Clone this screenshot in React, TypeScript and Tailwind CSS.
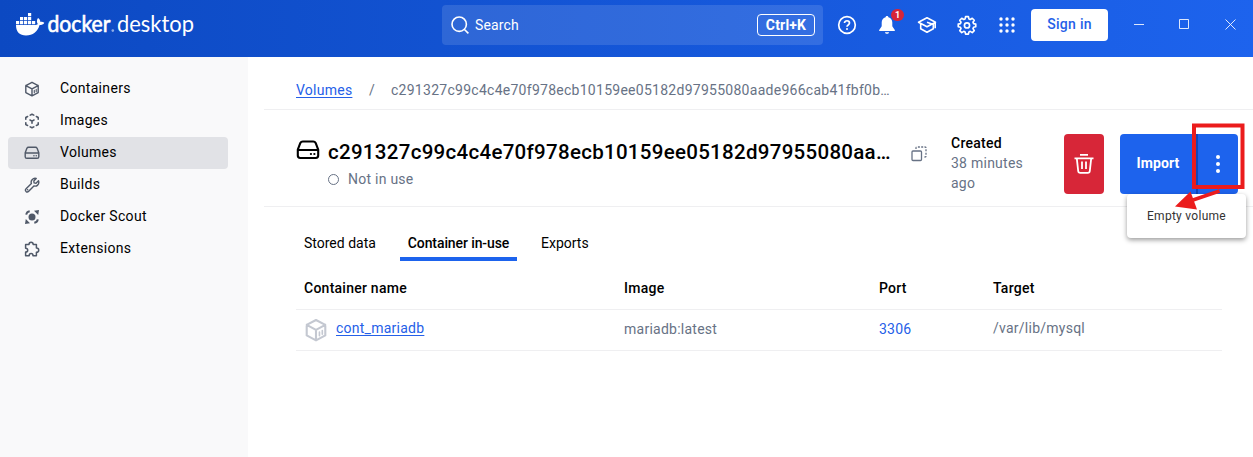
import React from "react";

const HASH_LONG = "c291327c99c4c4e70f978ecb10159ee05182d97955080aade966cab41fbf0b…";
const HASH_SHORT = "c291327c99c4c4e70f978ecb10159ee05182d97955080aa…";

function Logo() {
  return (
    <svg width="180" height="30" viewBox="0 0 180 30" className="block shrink-0" fill="#fff" aria-label="docker desktop">
      <path d="M12 3h3.2v3.2H12zM4 7h3.2v3.2H4zM8 7h3.2v3.2H8zM12 7h3.2v3.2H12zM0 11h3.2v3.2H0zM4 11h3.2v3.2H4zM8 11h3.2v3.2H8zM12 11h3.2v3.2H12zM16 11h3.2v3.2H16z" />
      <path d="M0 15H18.5C20.2 15 21.2 14.6 21.8 14C20.5 12 20.7 9.8 22 8C23.6 9.1 24.3 10.4 24.4 12C25.7 11.7 27.1 11.9 28.3 12.7C27.4 14.5 25.7 15.1 23.6 15.1C21.5 21.9 17 25.5 10 25.5C3.6 25.5 -0.1 22 0 15Z" />
      <text x="31.500" y="22" textLength="63" lengthAdjust="spacingAndGlyphs" stroke="#fff" strokeWidth=".6" className="font-['Lato',sans-serif] text-[22.5px]">docker</text>
      <circle cx="96.8" cy="20.6" r="1.3" opacity=".55" />
      <text x="101" y="22" textLength="77" lengthAdjust="spacingAndGlyphs" className="font-['Lato',sans-serif] text-[22.5px]">desktop</text>
    </svg>
  );
}

type IconProps = { size?: number; className?: string };

function Stroke({ size = 16, className = "", w = 1.4, children }: IconProps & { w?: number; children: React.ReactNode }) {
  return (
    <svg width={size} height={size} viewBox="0 0 16 16" fill="none" stroke="currentColor" strokeWidth={w} strokeLinejoin="round" strokeLinecap="round" className={`block shrink-0 ${className}`}>
      {children}
    </svg>
  );
}

const ContainerIcon = (p: IconProps) => (
  <Stroke {...p} w={1.4}>
    <path d="M8 1.3 14.2 4.6V11.6L8 14.9 1.8 11.6V4.6ZM1.8 4.6 8 7.9 14.2 4.6M8 7.9V14.9" />
    <path d="M10.3 9.4v2.4M12.2 8.4v2.4" strokeWidth="1.1" />
  </Stroke>
);

const ImageIcon = (p: IconProps) => (
  <Stroke {...p} w={1.6}>
    <path d="M6.2 2.1 8 1.2l1.8.9M12.4 3.5l1.8 1v1.7M14.2 9.8v1.8l-1.8.9M9.8 13.9 8 14.8l-1.8-.9M3.6 12.5l-1.8-.9V9.8M1.8 6.2V4.5l1.8-1" />
    <path d="M6 7 8 8.1 10 7M8 8.1v2.2" />
  </Stroke>
);

const VolumeIcon = (p: IconProps) => (
  <Stroke {...p} w={1.4}>
    <path d="M4.5 2.3h7c.8 0 1.3.4 1.6 1l1.7 4.5v3.9c0 .9-.7 1.6-1.6 1.6H2.8c-.9 0-1.6-.7-1.6-1.6V7.8l1.7-4.5c.3-.6.8-1 1.6-1ZM1.3 8h13.4" />
    <path d="M9.9 10.7h.1M12.2 10.7h.1" />
  </Stroke>
);

const WrenchIcon = (p: IconProps) => (
  <Stroke {...p} w={1.4}>
    <path d="M12.2 1.5 9.8 4l.3 1.9 1.9.3 2.5-2.4c.7 2 .1 3.6-1.1 4.6-1 .8-2.3.9-3.5.6L4.7 14.3c-.8.8-2 .8-2.7.1-.7-.8-.7-1.9.1-2.7L7.4 6.6c-.5-1.4-.3-2.8.7-3.9 1.1-1.2 2.5-1.7 4.1-1.2Z" />
    <path d="M3.6 12.8h.1" />
  </Stroke>
);

const ScoutIcon = (p: IconProps) => (
  <svg width="16" height="16" viewBox="0 0 16 16" className={`block shrink-0 ${p.className ?? ""}`} fill="currentColor">
    <circle cx="8" cy="8" r="3.500" />
    <path d="M10 1.800 15 1 14.200 6ZM6 14.200 1 15 1.800 10Z" />
    <path d="M2.200 5.700C2.500 3.700 3.700 2.500 5.700 2.200M13.800 10.300c-.3 2-1.500 3.200-3.500 3.500" fill="none" stroke="currentColor" strokeWidth="1.900" />
  </svg>
);

const PuzzleIcon = (p: IconProps) => (
  <Stroke {...p} w={1.500}>
    <path d="M5 3.600C5 .5 9.200.5 9.200 3.600h3.200v3.500c3.100 0 3.100 4.100 0 4.100v3.500H9c0-2.800-3.800-2.800-3.800 0H1.600v-3.600c2.800 0 2.800-3.800 0-3.800V3.600Z" />
  </Stroke>
);

const NAV = [
  { label: "Containers", Icon: ContainerIcon },
  { label: "Images", Icon: ImageIcon },
  { label: "Volumes", Icon: VolumeIcon, active: true },
  { label: "Builds", Icon: WrenchIcon },
  { label: "Docker Scout", Icon: ScoutIcon },
  { label: "Extensions", Icon: PuzzleIcon },
];

function HelpIcon() {
  return (
    <svg width="20" height="20" viewBox="0 0 20 20" fill="none" stroke="#fff" strokeWidth="1.7" className="block">
      <circle cx="10" cy="10" r="8.3" />
      <path d="M7.5 8.1c0-3.2 5-3.1 5 0 0 1.9-2.5 1.8-2.5 3.6" />
      <circle cx="10" cy="13.9" r="1" fill="#fff" stroke="none" />
    </svg>
  );
}

function BellIcon() {
  return (
    <svg width="20" height="20" viewBox="0 0 20 20" fill="#fff" className="block">
      <path d="M10 1c.8 0 1.3.5 1.4 1.3C14 3 15.3 5 15.3 7.6v3.7l2.5 3.6v1.2H2.2v-1.2l2.500-3.600V7.600C4.700 5 6 3 8.600 2.300 8.700 1.500 9.200 1 10 1ZM7.900 17.200h4.200c-.3 1-1.100 1.500-2.100 1.500s-1.800-.5-2.100-1.500Z" />
    </svg>
  );
}

function LearnIcon() {
  return (
    <svg width="20" height="20" viewBox="0 0 20 20" fill="none" stroke="#fff" strokeWidth="1.6" strokeLinejoin="round" className="block">
      <path d="M1.500 7.200 10 2.700 18.500 7.200 10 11.700ZM3.700 8.700v5.100L10 17.300l6.300-3.500V8.700M18.200 7.200v6M10 7.200l5 1.800" />
    </svg>
  );
}

function GearIcon() {
  return (
    <svg width="20" height="20" viewBox="0 0 24 24" fill="none" stroke="#fff" strokeWidth="2" strokeLinejoin="round" className="block">
      <circle cx="12" cy="12.500" r="3.100" />
      <path d="M10.300 2h3.400l.6 2.700 1.600.7 2.400-1.500 2.400 2.400-1.500 2.400.7 1.600 2.600.6v3.200l-2.600.6-.7 1.600 1.500 2.400-2.400 2.400-2.400-1.500-1.600.7-.6 2.700h-3.400l-.6-2.700-1.600-.7-2.400 1.500-2.400-2.400 1.500-2.400-.7-1.600L1.500 14.100v-3.200l2.600-.6.7-1.600-1.500-2.400 2.400-2.400 2.400 1.500 1.600-.7Z" />
    </svg>
  );
}

function GridIcon() {
  return (
    <svg width="20" height="20" viewBox="0 0 20 20" fill="#fff" className="block">
      {[4, 10, 16].map((y) => [4, 10, 16].map((x) => <circle key={`${x}-${y}`} cx={x} cy={y} r="1.700" />))}
    </svg>
  );
}

function Header() {
  return (
    <header className="flex h-[57px] items-start bg-linear-to-r from-[#0c49c2] to-[#1d63ed] text-white">
      <div className="flex h-[50px] w-[442px] items-center pl-4"><Logo /></div>
      <div className="mt-[5px] flex h-10 w-[381px] items-center rounded bg-white/12 pr-2 pl-[9px]">
        <svg width="18" height="18" viewBox="0 0 18 18" fill="none" stroke="#fff" strokeWidth="1.600" className="mr-[5px] block">
          <circle cx="8.200" cy="8.200" r="7.200" />
          <path d="m13.200 13.200 4.200 4.200" />
        </svg>
        <span className="flex-1 pb-px pl-px text-[14px] tracking-[0.15px]">Search</span>
        <span className="flex h-[22px] w-[58px] items-center justify-center rounded border border-white pb-px text-[14px] leading-none font-bold tracking-[0.2px]">Ctrl+K</span>
      </div>
      <div className="ml-[14px] flex h-[50px] items-center gap-5">
        <HelpIcon />
        <div className="relative">
          <BellIcon />
          <span className="absolute -top-[6px] left-[14px] flex h-3 w-[13px] items-center justify-center rounded-full bg-[#d72638] text-[9px] leading-none font-bold">1</span>
        </div>
        <LearnIcon />
        <GearIcon />
        <GridIcon />
      </div>
      <button className="mt-[9px] ml-[14px] h-8 w-[77px] rounded bg-white pb-0.5 text-[14px] font-medium tracking-[0.3px] text-[#2560e8]">Sign in</button>
      <svg width="110" height="50" viewBox="0 0 110 50" fill="none" stroke="#fff" strokeOpacity=".85" className="ml-[22px] block">
        <path d="M4 24.500h10M49.500 19.500h9v9h-9zM95.500 19.500l10 10M105.500 19.500l-10 10" />
      </svg>
    </header>
  );
}

function Sidebar() {
  return (
    <nav className="w-[248px] shrink-0 bg-[#f9f9fa] pt-4 pl-2">
      {NAV.map(({ label, Icon, active }) => (
        <div key={label} className={`flex h-8 w-[220px] items-center rounded pl-4 ${active ? "bg-[#e1e2e6]" : ""}`}>
          <Icon className="text-[#505968]" />
          <span className="ml-5 pb-0.5 text-[14px] tracking-[0.32px] text-black">{label}</span>
        </div>
      ))}
    </nav>
  );
}

function Actions() {
  return (
    <div className="relative flex h-[60px]">
      <button className="flex w-10 items-center justify-center rounded bg-[#d72638]">
        <svg width="20" height="20" viewBox="0 0 20 20" fill="none" stroke="#fff" strokeWidth="1.800" className="block">
          <path d="M6 .9h8M.5 4.300h19M2.800 4.300 4.200 17c.1 1.200.9 1.900 2 1.900h7.600c1.100 0 1.900-.7 2-1.900L17.200 4.300M8 7.500v7.500M12 7.500v7.500" />
        </svg>
      </button>
      <button className="ml-4 w-[76px] rounded-l bg-[#1d63ed] pb-0.5 text-[14px] font-bold tracking-[0.1px] text-white">Import</button>
      <button className="flex w-[42px] items-center justify-center rounded-r border-l-2 border-[#1147b8] bg-[#1d63ed]">
        <svg width="6" height="20" viewBox="0 0 6 20" fill="#fff"><circle cx="3" cy="3" r="2" /><circle cx="3" cy="10" r="2" /><circle cx="3" cy="17" r="2" /></svg>
      </button>
      <div className="absolute top-[60px] left-[63px] flex h-11 w-[119px] items-center justify-center rounded bg-white text-[12px] tracking-[0.28px] text-[#333] shadow-[0_2px_5px_rgba(0,0,0,0.4)]">Empty volume</div>
      <svg width="76" height="90" viewBox="0 0 76 90" className="absolute -top-[14px] left-[108px]">
        <rect x="22" y="5.500" width="48.500" height="61.500" fill="none" stroke="#eb1c1c" strokeWidth="4" />
        <path d="M47.500 71 21 80" stroke="#eb1c1c" strokeWidth="3.500" />
        <path d="M3 86.500 18.500 71.500 25 89.500Z" fill="#eb1c1c" />
      </svg>
    </div>
  );
}

export default function App() {
  return (
    <div className="flex h-[457px] w-[1253px] flex-col overflow-hidden bg-white font-['Roboto',sans-serif] text-[14px] leading-5">
      <Header />
      <div className="flex min-h-0 flex-1">
        <Sidebar />
        <main className="min-w-0 flex-1 pl-4">
          <div className="flex h-[53px] items-center border-b border-[#efeff1] pt-[13px] pl-8 tracking-[0.25px] text-[#677285]">
            <a className="w-14 text-[#2560e8] underline underline-offset-2">Volumes</a>
            <span className="ml-[17px] w-[22px]">/</span>
            <span className="tracking-[0.27px] whitespace-nowrap">{HASH_LONG}</span>
          </div>
          <section className="flex h-[97px] border-b border-[#efeff1] pl-8">
            <VolumeIcon size={24} className="mt-[28px] text-black" />
            <div className="ml-2 w-[563px] pt-[28px]">
              <h1 className="text-[20.5px] leading-7 font-medium tracking-[0.29px] whitespace-nowrap text-black">{HASH_SHORT}</h1>
              <div className="mt-[3px] flex items-center tracking-[0.25px] text-[#677285]">
                <span className="mr-[9px] size-[11px] rounded-full border border-[#677285]" />
                Not in use
              </div>
            </div>
            <svg width="16" height="16" viewBox="0 0 16 16" fill="none" stroke="#677285" strokeWidth="1.300" className="mt-[36px] ml-5 block">
              <rect x="1" y="5" width="9.500" height="9.500" rx="1" />
              <path d="M5 3V2q0-1 1-1h8q1 0 1 1v8q0 1-1 1h-1" strokeDasharray="2 1.300" />
            </svg>
            <div className="ml-6 w-[113px] pt-[23px] tracking-[0.25px] text-[#677285]">
              <div className="font-medium text-black">Created</div>
              <div className="w-20">38 minutes ago</div>
            </div>
            <div className="pt-6"><Actions /></div>
          </section>
          <div className="flex pt-[26px] pl-10 text-black">
            <span className="w-24">Stored data</span>
            <span className="flex h-7 w-[117px] justify-center border-b-4 border-[#1d63ed] font-medium tracking-[-0.1px]">Container in-use</span>
            <span className="ml-6">Exports</span>
          </div>
          <div className="ml-8 w-[926px] tracking-[0.25px] text-[#677285]">
            <div className="grid h-[49px] grid-cols-[320px_255px_114px_1fr] items-center border-b border-[#efeff1] pt-[5px] pl-2 font-medium text-black">
              <span>Container name</span><span>Image</span><span>Port</span><span>Target</span>
            </div>
            <div className="grid h-[41px] grid-cols-[320px_255px_114px_1fr] items-center border-b border-[#efeff1] pl-2">
              <div className="flex items-center">
                <ContainerIcon size={24} className="text-[#c4c8d1]" />
                <a className="mb-1 ml-2 text-[#2560e8] underline underline-offset-2">cont_mariadb</a>
              </div>
              <span className="mb-0.5">mariadb:latest</span>
              <span className="mb-0.5 text-[#2560e8]">3306</span>
              <span className="mb-1">/var/lib/mysql</span>
            </div>
          </div>
        </main>
      </div>
    </div>
  );
}
